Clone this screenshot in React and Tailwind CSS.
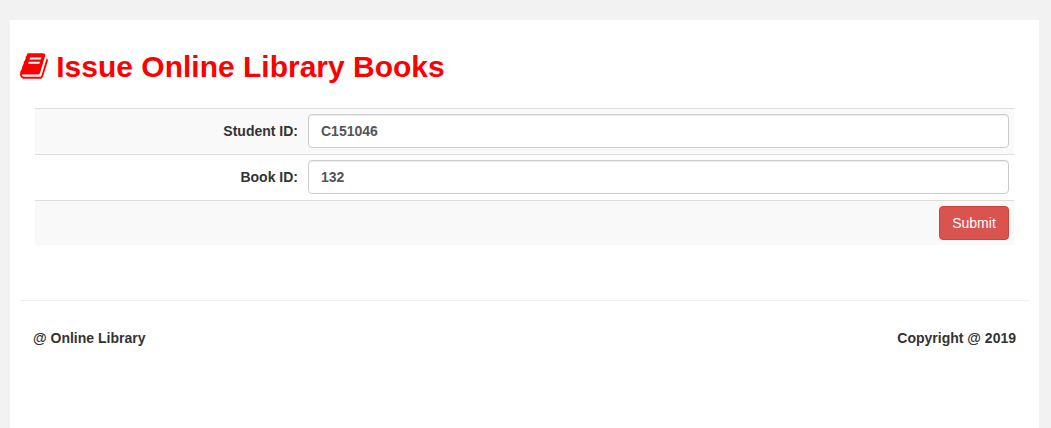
import React from "react";

function Field({ label, value, shaded }) {
  return (
    <div className={`flex h-[46px] items-start border-t border-[#ddd] p-[5px] ${shaded ? "bg-[#f9f9f9]" : "bg-white"}`}>
      <label className="w-[258px] pt-[7px] text-right font-bold leading-5">{label}</label>
      <input
        defaultValue={value}
        className="ml-[10px] h-[34px] min-w-0 flex-1 rounded-[4px] border border-[#ccc] bg-white px-3 py-1.5 font-bold text-[#555] shadow-[inset_0_1px_1px_rgba(0,0,0,0.075)] outline-none"
      />
    </div>
  );
}

export default function App() {
  return (
    <div className="h-[428px] overflow-hidden bg-[#f2f2f2] pl-[10px] pr-3 pt-5 font-['Liberation_Sans',Arial,sans-serif] text-[14px] leading-5 text-[#333]">
      <main className="h-[408px] bg-white px-[10px] pt-[30px]">
        <h1 className="flex h-[33px] items-center text-[30px] font-bold leading-[33px] text-[#f00]">
          <svg viewBox="0 0 1664 1792" className="mb-px mr-[8.4px] h-[30px] w-[27.86px]" fill="currentColor" aria-hidden="true">
            <path d="M1639 478q40 57 18 129l-275 906q-19 64-76.500 107.500t-122.500 43.500h-923q-77 0-148.500-53.500t-99.500-131.500q-24-67-2-127 0-4 3-27t4-37q1-8-3-21.500t-3-19.500q2-11 8-21t16.500-23.500 16.500-23.500q23-38 45-91.500t30-91.500q3-10 .5-30t-.5-28q3-11 17-28t17-23q21-36 42-92t25-90q1-9-2.500-32t.5-28q4-13 22-30.500t22-22.500q19-26 42.500-84.500t27.500-96.500q1-8-3-25.500t-2-26.500q2-8 9-18t18-23 17-21q8-12 16.500-30.500t15-35 16-36 19.500-32 26.500-23.500 36-11.500 47.500 5.500l-1 3q38-9 51-9h761q74 0 114 56t18 130l-274 906q-36 119-71.500 153.500t-128.500 34.500h-869q-27 0-38 15-11 16-1 43 24 70 144 70h923q29 0 56-15.500t35-41.500l300-987q7-22 5-57 38 15 59 43zm-1064 2q-4 13 2 22.500t20 9.500h608q13 0 25.500-9.500t16.500-22.500l21-64q4-13-2-22.500t-20-9.500h-608q-13 0-25.500 9.500t-16.500 22.500zm-83 256q-4 13 2 22.500t20 9.500h608q13 0 25.500-9.500t16.500-22.500l21-64q4-13-2-22.500t-20-9.500h-608q-13 0-25.500 9.500t-16.500 22.500z" />
          </svg>
          Issue Online Library Books
        </h1>
        <form className="ml-[15px] mt-[25px] w-[979px]" onSubmit={(e) => e.preventDefault()}>
          <Field label="Student ID:" value="C151046" shaded />
          <Field label="Book ID:" value="132" />
          <div className="flex h-[45px] justify-end border-t border-[#ddd] bg-[#f9f9f9] p-[5px]">
            <button className="h-[34px] w-[70px] rounded-[4px] border border-[#d43f3a] bg-[#d9534f] text-white">Submit</button>
          </div>
        </form>
        <footer className="mt-[55px] flex w-[1009px] justify-between border-t border-[#eee] pl-[13px] pr-[13px] pt-[27px] font-bold">
          <span>@ Online Library</span>
          <span>Copyright @ 2019</span>
        </footer>
      </main>
    </div>
  );
}
